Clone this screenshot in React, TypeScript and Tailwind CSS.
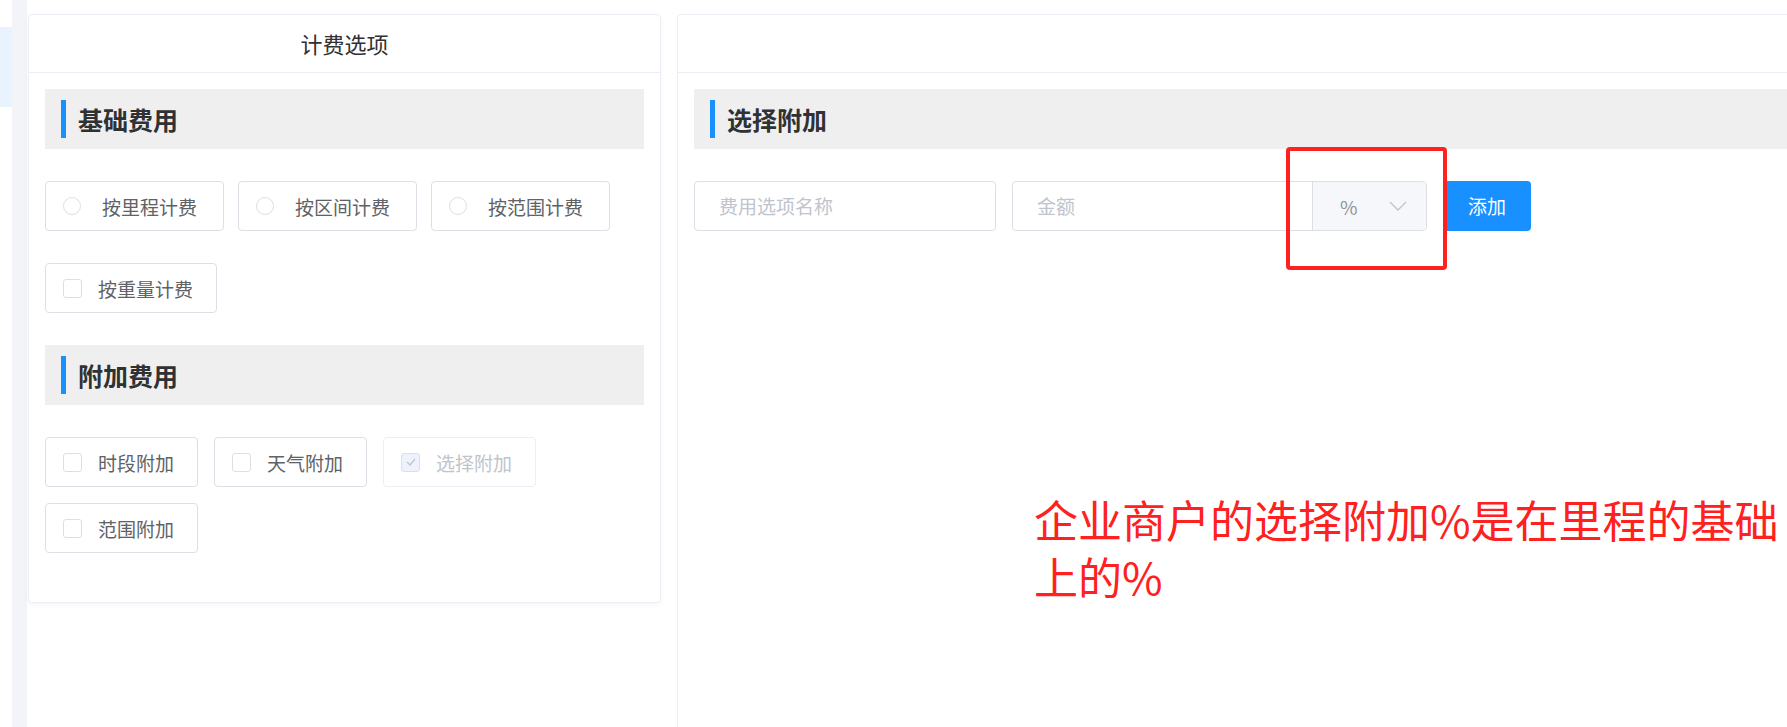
import React from 'react';

const FONT = { fontFamily: '"Noto Sans CJK SC", "Noto Sans", sans-serif' };

function SectionBar({ title }: { title: string }) {
  return (
    <div className="flex items-center h-[60px] bg-[#efefef] pl-[16px]">
      <span className="w-[5px] h-[38px] bg-[#1890ff]" />
      <span className="ml-[12px] text-[25px] font-bold text-[#303133] leading-none">{title}</span>
    </div>
  );
}

function RadioBox({ label }: { label: string }) {
  return (
    <div className="flex items-center h-[50px] border border-[#dcdfe6] rounded-[4px] pl-[17px] pr-[26px]">
      <span className="w-[18px] h-[18px] rounded-full border border-[#dcdfe6] bg-white" />
      <span className="ml-[21px] text-[19px] text-[#606266] leading-none">{label}</span>
    </div>
  );
}

function CheckBox({ label, disabled }: { label: string; disabled?: boolean }) {
  return (
    <div
      className={
        disabled
          ? 'flex items-center h-[50px] border border-[#ebeef5] rounded-[4px] pl-[17px] pr-[23px]'
          : 'flex items-center h-[50px] border border-[#dcdfe6] rounded-[4px] pl-[17px] pr-[23px]'
      }
    >
      {disabled ? (
        <span className="flex items-center justify-center w-[19px] h-[19px] rounded-[3px] border border-[#dcdfe6] bg-[#edf2fc]">
          <svg width="10" height="8" viewBox="0 0 10 8">
            <polyline points="1,4 4,7 9,1" fill="none" stroke="#c0c4cc" strokeWidth="1.2" />
          </svg>
        </span>
      ) : (
        <span className="w-[19px] h-[19px] rounded-[3px] border border-[#dcdfe6] bg-white" />
      )}
      <span
        className={
          disabled
            ? 'ml-[16px] text-[19px] text-[#c0c4cc] leading-none'
            : 'ml-[16px] text-[19px] text-[#606266] leading-none'
        }
      >
        {label}
      </span>
    </div>
  );
}

export default function App() {
  return (
    <div className="relative flex w-[1787px] h-[727px] overflow-hidden bg-white" style={FONT}>
      {/* sidebar edge */}
      <div className="w-[12px] shrink-0 bg-white">
        <div className="mt-[27px] h-[80px] bg-[#e8f3fe]" />
      </div>
      <div className="w-[15px] shrink-0 bg-[#f3f4f7]" />

      {/* main */}
      <div className="flex-1 flex items-start gap-[16px] pt-[14px] pl-px bg-white">
        {/* 计费选项 */}
        <div className="w-[633px] h-[589px] shrink-0 border border-[#ebeef5] rounded-[4px] bg-white shadow-[0_2px_6px_rgba(0,0,0,0.04)]">
          <div className="h-[58px] flex items-center justify-center border-b border-[#ebeef5] text-[22px] text-[#303133]">
            计费选项
          </div>
          <div className="p-[16px]">
            <SectionBar title="基础费用" />
            <div className="mt-[32px] flex gap-[14px]">
              <RadioBox label="按里程计费" />
              <RadioBox label="按区间计费" />
              <RadioBox label="按范围计费" />
            </div>
            <div className="mt-[32px] flex">
              <CheckBox label="按重量计费" />
            </div>
            <div className="mt-[32px]">
              <SectionBar title="附加费用" />
            </div>
            <div className="mt-[32px] flex flex-wrap gap-x-[16px] gap-y-[16px]">
              <CheckBox label="时段附加" />
              <CheckBox label="天气附加" />
              <CheckBox label="选择附加" disabled />
              <CheckBox label="范围附加" />
            </div>
          </div>
        </div>

        {/* 选择附加 */}
        <div className="w-[1200px] h-[800px] shrink-0 border border-[#ebeef5] rounded-[4px] bg-white">
          <div className="h-[58px] border-b border-[#ebeef5]" />
          <div className="p-[16px]">
            <SectionBar title="选择附加" />
            <div className="mt-[32px] flex items-center">
              <div className="w-[302px] h-[50px] flex items-center border border-[#dcdfe6] rounded-[4px] pl-[24px] text-[19px] text-[#c0c4cc]">
                费用选项名称
              </div>
              <div className="ml-[16px] w-[415px] h-[50px] flex border border-[#dcdfe6] rounded-[4px] overflow-hidden">
                <div className="flex-1 flex items-center pl-[24px] text-[19px] text-[#c0c4cc]">金额</div>
                <div className="w-[114px] flex items-center border-l border-[#dcdfe6] bg-[#f5f7fa] pl-[27px]">
                  <span className="text-[19px] text-[#909399] leading-none">%</span>
                  <svg className="ml-[31px]" width="18" height="10" viewBox="0 0 18 10">
                    <polyline points="1,1 9,9 17,1" fill="none" stroke="#c0c4cc" strokeWidth="1.3" />
                  </svg>
                </div>
              </div>
              <button className="ml-[16px] w-[88px] h-[50px] rounded-[4px] bg-[#1890ff] text-white text-[19px]">
                添加
              </button>
            </div>
          </div>
        </div>
      </div>

      {/* annotations */}
      <div className="absolute left-[1286px] top-[147px] w-[161px] h-[123px] border-[4px] border-[#ff2020] rounded-[4px]" />
      <div className="absolute left-[1034px] top-[491px] w-[760px] text-[44px] leading-[57px] text-[#ff2020]">
        企业商户的选择附加%是在里程的基础上的%
      </div>
    </div>
  );
}
